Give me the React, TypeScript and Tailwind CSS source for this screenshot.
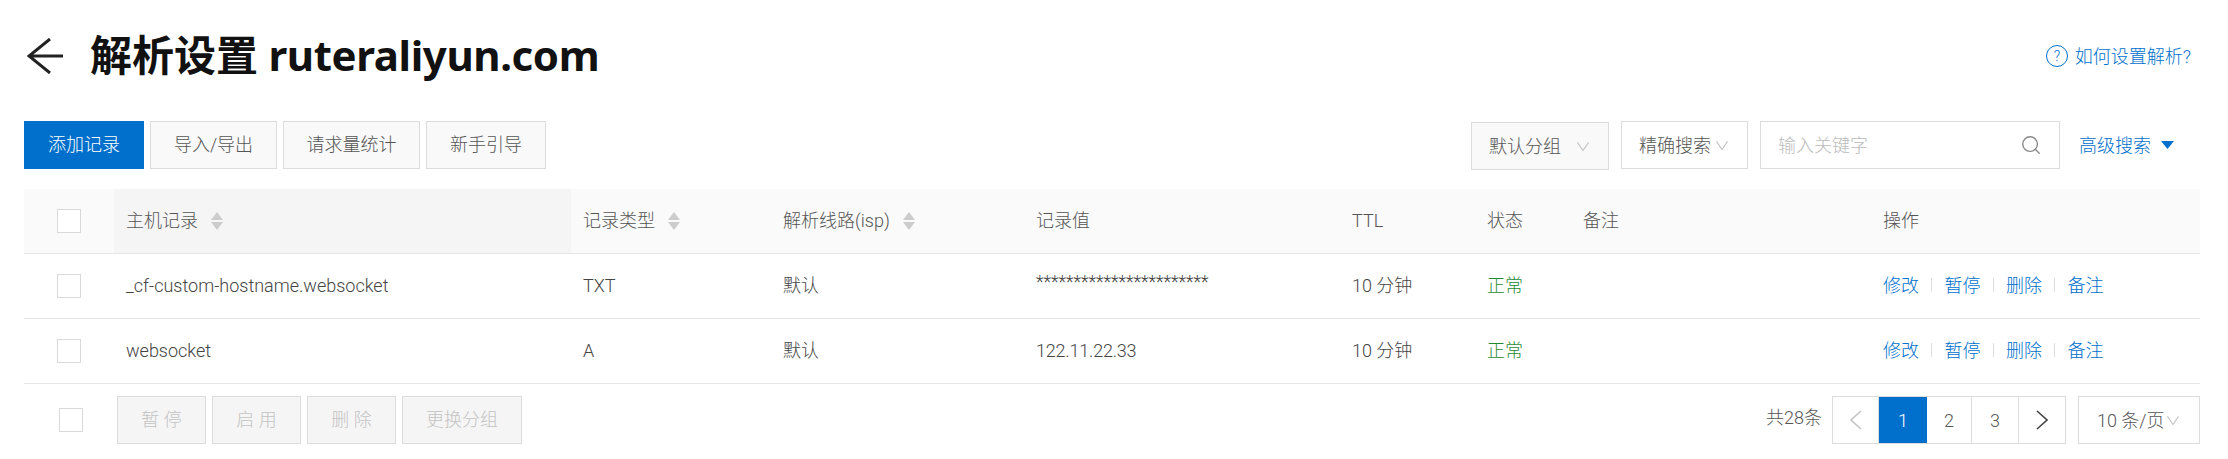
import { Search } from 'lucide-react';
import type { ReactNode } from 'react';

const FONT = 'font-["Roboto","Noto_Sans_CJK_SC",sans-serif]';
const COLUMNS = 'grid-cols-[90px_457px_200px_253px_316px_135px_96px_300px_329px]';

function Chevron({ className }: { className: string }) {
  return (
    <svg viewBox="0 0 14 12" fill="none" stroke="#c4c4c4" strokeWidth="1.2" className={className}>
      <path d="M1 1.5 7 10.5 13 1.5" />
    </svg>
  );
}

function SortIcon() {
  return (
    <svg viewBox="0 0 12 18" fill="#cccccc" className="ml-[13px] h-[18px] w-[12px]">
      <path d="M6 0 12 8H0zM0 10H12L6 18z" />
    </svg>
  );
}

function Checkbox({ className = '' }: { className?: string }) {
  return <span className={`block h-6 w-6 border border-[#d9d9d9] bg-white ${className}`} />;
}

function ToolButton({ children, width, primary }: { children: ReactNode; width: string; primary?: boolean }) {
  return (
    <button
      className={`h-12 ${width} border pb-[2px] text-center text-[18px] ${
        primary
          ? 'border-[#0070cc] bg-[#0070cc] text-white'
          : 'border-[#dcdcdc] bg-[#f9f9f9] text-[#555555]'
      }`}
    >
      {children}
    </button>
  );
}

function DisabledButton({ children, width }: { children: ReactNode; width: string }) {
  return (
    <button className={`h-12 ${width} border border-[#dcdcdc] bg-[#f5f5f5] pb-[2px] text-center text-[18px] text-[#c4c4c4]`}>
      {children}
    </button>
  );
}

function HeadCell({ children, sort, active }: { children: ReactNode; sort?: boolean; active?: boolean }) {
  return (
    <div className={`flex items-center pl-3 ${active ? 'bg-[#f5f5f5]' : ''}`}>
      <span className="mb-[2px]">{children}</span>
      {sort && <SortIcon />}
    </div>
  );
}

function Actions() {
  const items = ['修改', '暂停', '删除', '备注'];
  return (
    <div className="flex items-center pl-3 text-[#0070cc]">
      {items.map((item, i) => (
        <span key={item} className="flex items-center">
          {i > 0 && <span className="mx-[12.25px] h-[14px] w-px bg-[#dddddd]" />}
          {item}
        </span>
      ))}
    </div>
  );
}

function Row({ host, type, value, valueClass }: { host: string; type: string; value: string; valueClass?: string }) {
  return (
    <div className={`grid ${COLUMNS} h-[65px] items-center border-b border-[#e5e5e5] pb-[2px] text-[#444444]`}>
      <div className="pt-[2px] pl-[33px]">
        <Checkbox />
      </div>
      <div className="pl-3">{host}</div>
      <div className="pl-3">{type}</div>
      <div className="pl-3">默认</div>
      <div className={`pl-3 ${valueClass ?? ''}`}>{value}</div>
      <div className="pl-3">10 分钟</div>
      <div className="pl-3 text-[#1f8a35]">正常</div>
      <div />
      <Actions />
    </div>
  );
}

function PageCell({ children, active, width }: { children: ReactNode; active?: boolean; width: string }) {
  return (
    <div
      className={`flex h-full ${width} items-center justify-center ${
        active ? 'bg-[#0070cc] text-white' : 'border-r border-[#dcdcdc] text-[#555555] last:border-r-0'
      }`}
    >
      {children}
    </div>
  );
}

export default function App() {
  return (
    <div className={`h-[459px] w-[2228px] overflow-hidden bg-white pl-6 pr-7 text-[18px] font-light ${FONT}`}>
      <header className="flex h-[112px] items-center justify-between pr-[9px]">
        <div className="flex items-center">
          <svg viewBox="0 0 36 36" fill="none" stroke="#222222" strokeWidth="3" className="ml-[3px] h-9 w-9">
            <path d="M36 18H2M23 1 2 18l21 17" />
          </svg>
          <h1 className="ml-[27px] text-[42px] leading-none font-bold text-[#111111]">
            解析设置 <span className='font-["Noto_Sans",sans-serif] tracking-[-0.4px]'>ruteraliyun.com</span>
          </h1>
        </div>
        <a className="flex items-center text-[#0070cc]">
          <span className="mr-[7px] flex h-[22px] w-[22px] items-center justify-center rounded-full border border-[#0070cc] text-[14px]">
            ?
          </span>
          如何设置解析?
        </a>
      </header>

      <div className="mt-[9px] flex items-start justify-between">
        <div className="flex gap-[6px]">
          <ToolButton width="w-[120px]" primary>添加记录</ToolButton>
          <ToolButton width="w-[127px]">导入/导出</ToolButton>
          <ToolButton width="w-[137px]">请求量统计</ToolButton>
          <ToolButton width="w-[120px]">新手引导</ToolButton>
        </div>
        <div className="flex items-start">
          <div className="mt-px flex h-12 w-[138px] items-center border border-[#dcdcdc] bg-[#f9f9f9] pl-[17px] text-[#555555]">
            默认分组
            <Chevron className="ml-[15px] h-[11px] w-[14px]" />
          </div>
          <div className="ml-3 flex h-12 w-[127px] items-center border border-[#dcdcdc] pl-[17px] text-[#555555]">
            精确搜索
            <Chevron className="ml-[4px] h-[11px] w-[14px]" />
          </div>
          <div className="ml-3 flex h-12 w-[300px] items-center justify-between border border-[#dcdcdc] pr-[17px] pl-[17px] text-[#bbbbbb]">
            输入关键字
            <Search className="h-[22px] w-[22px] text-[#888888]" strokeWidth={1.5} />
          </div>
          <div className="ml-[19px] flex h-12 w-[121px] items-center text-[#0070cc]">
            高级搜索
            <svg viewBox="0 0 13 8" fill="#0070cc" className="ml-[10px] h-2 w-[13px]">
              <path d="M0 0H13L6.5 8z" />
            </svg>
          </div>
        </div>
      </div>

      <div className="mt-[19px]">
        <div className={`grid ${COLUMNS} h-[65px] border-b border-[#e5e5e5] bg-[#fafafa] text-[#555555]`}>
          <div className="flex items-center pl-[33px]">
            <Checkbox />
          </div>
          <HeadCell sort active>主机记录</HeadCell>
          <HeadCell sort>记录类型</HeadCell>
          <HeadCell sort>解析线路(isp)</HeadCell>
          <HeadCell>记录值</HeadCell>
          <HeadCell>TTL</HeadCell>
          <HeadCell>状态</HeadCell>
          <HeadCell>备注</HeadCell>
          <HeadCell>操作</HeadCell>
        </div>
        <Row host="_cf-custom-hostname.websocket" type="TXT" value="***********************" valueClass="pb-[5px] text-[17.7px]" />
        <Row host="websocket" type="A" value="122.11.22.33" valueClass="tracking-[-0.2px]" />
      </div>

      <footer className="mt-3 flex items-start justify-between">
        <div className="flex items-center">
          <Checkbox className="ml-[35px]" />
          <div className="ml-[34px] flex gap-[6px]">
            <DisabledButton width="w-[89px]">暂 停</DisabledButton>
            <DisabledButton width="w-[89px]">启 用</DisabledButton>
            <DisabledButton width="w-[89px]">删 除</DisabledButton>
            <DisabledButton width="w-[120px]">更换分组</DisabledButton>
          </div>
        </div>
        <div className="flex items-center">
          <span className="mr-[10px] mb-[6px] text-[#555555]">共28条</span>
          <div className="flex h-12 items-stretch border border-[#dcdcdc]">
            <PageCell width="w-[46px]">
              <svg viewBox="0 0 12 20" fill="none" stroke="#c4c4c4" strokeWidth="1.6" className="h-5 w-3">
                <path d="M11 1 1 10l10 9" />
              </svg>
            </PageCell>
            <PageCell width="w-[48px]" active>1</PageCell>
            <PageCell width="w-[45px]">2</PageCell>
            <PageCell width="w-[47px]">3</PageCell>
            <PageCell width="w-[46px]">
              <svg viewBox="0 0 12 20" fill="none" stroke="#444444" strokeWidth="1.6" className="h-5 w-3">
                <path d="M1 1l10 9-10 9" />
              </svg>
            </PageCell>
          </div>
          <div className="ml-3 flex h-12 w-[122px] items-center border border-[#dcdcdc] pl-[18px] text-[#555555]">
            10 条/页
            <Chevron className="ml-[1px] h-[11px] w-[14px]" />
          </div>
        </div>
      </footer>
    </div>
  );
}
